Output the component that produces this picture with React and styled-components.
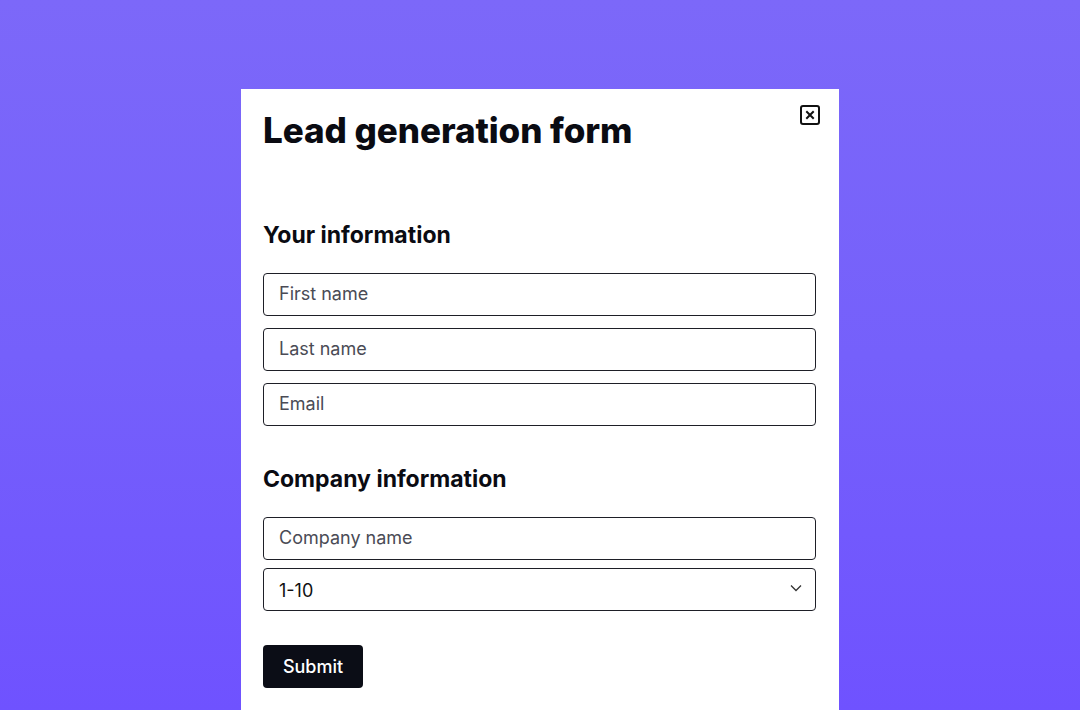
import styled, { createGlobalStyle } from "styled-components";

const GlobalStyle = createGlobalStyle`
  html, body {
    margin: 0;
    height: 100%;
  }
  body {
    font-family: Inter, "Liberation Sans", sans-serif;
    background: linear-gradient(180deg, #7c68f9 0%, #7560fb 50%, #6f52ff 100%);
    overflow: hidden;
  }
`;

const Page = styled.main`
  display: flex;
  justify-content: center;
  padding-top: 89px;
  min-height: 710px;
  box-sizing: border-box;
`;

const Card = styled.section`
  position: relative;
  width: 598px;
  min-height: 621px;
  box-sizing: border-box;
  background: #fff;
  padding: 21px 23px 0 22px;
`;

const Title = styled.h1`
  margin: 0;
  font-size: 35px;
  font-weight: 800;
  letter-spacing: -0.05px;
  line-height: 40px;
  color: #0a0b12;
`;

const CloseButton = styled.button`
  position: absolute;
  top: 16px;
  right: 19px;
  width: 20px;
  height: 20px;
  padding: 0;
  border: 2px solid #111;
  border-radius: 3px;
  background: #fff;
  display: grid;
  place-items: center;
  cursor: pointer;
`;

const SectionTitle = styled.h2`
  margin: ${({ $top }) => $top}px 0 24px;
  font-size: 23px;
  font-weight: 700;
  letter-spacing: 0;
  line-height: 28px;
  color: #0a0b12;
`;

const Fields = styled.div`
  display: flex;
  flex-direction: column;
  gap: ${({ $gap }) => $gap}px;
`;

const Input = styled.input`
  height: 43px;
  box-sizing: border-box;
  border: 1.5px solid #1e1f27;
  border-radius: 4px;
  padding: 0 15px 2px;
  font-family: Inter, "Liberation Sans", sans-serif;
  font-size: 18px;
  color: #222;
  outline: none;

  &::placeholder {
    color: #4a4b55;
  }
`;

const SelectWrap = styled.div`
  position: relative;
  height: 43px;
`;

const Select = styled.select`
  width: 100%;
  height: 100%;
  box-sizing: border-box;
  appearance: none;
  border: 1.5px solid #1e1f27;
  border-radius: 4px;
  padding: 2px 15px 0;
  background: #fff;
  font-family: Inter, "Liberation Sans", sans-serif;
  font-size: 18px;
  color: #111;
  outline: none;
`;

const Chevron = styled.svg`
  position: absolute;
  right: 14px;
  top: 16px;
  pointer-events: none;
`;

const SubmitButton = styled.button`
  margin-top: 34px;
  width: 100px;
  height: 43px;
  border: none;
  border-radius: 4px;
  background: #0b0d16;
  color: #fff;
  font-family: Inter, "Liberation Sans", sans-serif;
  font-size: 18px;
  font-weight: 500;
  cursor: pointer;
`;

const App = () => {
  return (
    <>
      <GlobalStyle />
      <Page>
        <Card>
          <Title>Lead generation form</Title>
          <CloseButton aria-label="Close">
            <svg width="10" height="10" viewBox="0 0 10 10">
              <path d="M2 2 L8 8 M8 2 L2 8" stroke="#111" strokeWidth="2" strokeLinecap="square" />
            </svg>
          </CloseButton>

          <SectionTitle $top={71}>Your information</SectionTitle>
          <Fields $gap={12}>
            <Input placeholder="First name" />
            <Input placeholder="Last name" />
            <Input placeholder="Email" />
          </Fields>

          <SectionTitle $top={39}>Company information</SectionTitle>
          <Fields $gap={8}>
            <Input placeholder="Company name" />
            <SelectWrap>
              <Select defaultValue="1-10">
                <option>1-10</option>
                <option>11-50</option>
                <option>51-200</option>
                <option>200+</option>
              </Select>
              <Chevron width="12" height="8" viewBox="0 0 12 8">
                <path d="M1 1.5 L6 6.5 L11 1.5" fill="none" stroke="#333" strokeWidth="1.3" />
              </Chevron>
            </SelectWrap>
          </Fields>

          <SubmitButton>Submit</SubmitButton>
        </Card>
      </Page>
    </>
  );
};

export default App;
